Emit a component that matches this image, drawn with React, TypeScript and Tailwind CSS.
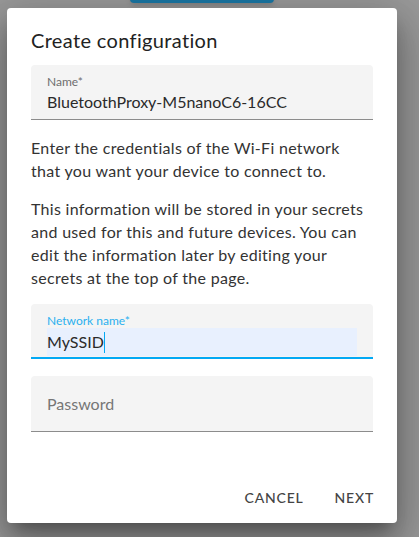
import React from 'react';

export default function App() {
  return (
    <div className="relative w-[419px] h-[537px] overflow-hidden bg-[#9a9a9a] font-['Lato','Open_Sans',sans-serif]">
      {/* page button peeking under the scrim */}
      <div className="absolute left-[130px] top-[-30px] w-[144px] h-[33px] rounded bg-[#1a78a6] shadow-md" />

      {/* Dialog */}
      <div className="absolute left-[7px] top-[8px] w-[390px] h-[515px] rounded bg-white shadow-[0_11px_15px_-7px_rgba(0,0,0,0.3),0_24px_38px_3px_rgba(0,0,0,0.2),0_9px_46px_8px_rgba(0,0,0,0.18)] flex flex-col">
        <div className="px-6 pt-[16px]">
          <h2 className="text-[20px] leading-[32px] tracking-[0.35px] text-[#222] font-normal">Create configuration</h2>

          {/* Name field */}
          <div className="mt-[9px] h-[55px] bg-[#f4f4f4] rounded-t border-b border-[#8c8c8c] px-4 flex flex-col">
            <span className="mt-[10px] text-[12px] leading-[14px] text-[#6e6e6e]">Name*</span>
            <span className="mt-[2px] text-[16px] leading-[22px] text-[#2a2a2a]">BluetoothProxy-M5nanoC6-16CC</span>
          </div>

          <p className="mt-4 text-[16px] leading-[23px] tracking-[0.3px] text-[#333]">
            Enter the credentials of the Wi-Fi network
            <br />
            that you want your device to connect to.
          </p>
          <p className="mt-[15px] text-[16px] leading-[23px] tracking-[0.3px] text-[#333]">
            This information will be stored in your secrets
            <br />
            and used for this and future devices. You can
            <br />
            edit the information later by editing your
            <br />
            secrets at the top of the page.
          </p>

          {/* Network name field, focused */}
          <div className="mt-[15px] h-[55px] bg-[#f4f4f4] rounded-t border-b-2 border-[#03a9f4] px-4 flex flex-col">
            <span className="mt-[10px] text-[12px] leading-[14px] text-[#2ab0f0]">Network name*</span>
            <div className="h-[28px] bg-[#e8f0fe] flex items-center">
              <span className="text-[16px] leading-[22px] text-[#2a2a2a]">MySSID</span>
              <span className="w-px h-[21px] bg-[#03a9f4]" />
            </div>
          </div>

          {/* Password field */}
          <div className="mt-[17px] h-[56px] bg-[#f4f4f4] rounded-t border-b border-[#8c8c8c] px-4 flex items-center">
            <span className="text-[16px] text-[#767676]">Password</span>
          </div>
        </div>

        <div className="mt-auto h-[52px] flex items-center justify-end gap-[15px] pr-[15px]">
          <button className="h-9 px-2 text-[14px] font-medium tracking-[0.8px] text-[#444]">CANCEL</button>
          <button className="h-9 px-2 text-[14px] font-medium tracking-[0.8px] text-[#444]">NEXT</button>
        </div>
      </div>
    </div>
  );
}
